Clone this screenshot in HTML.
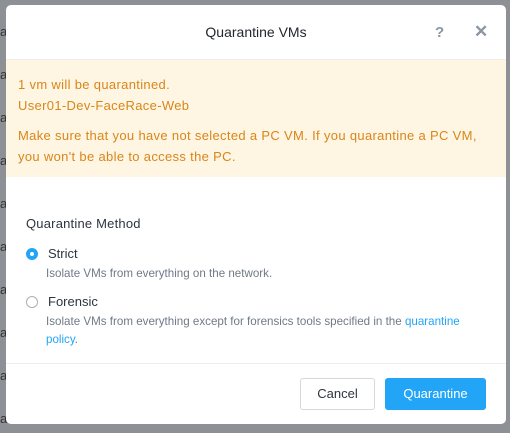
<!DOCTYPE html>
<html><head><style>
body{margin:0;width:510px;height:433px;background:#8d9094;position:relative;overflow:hidden;font-family:"Liberation Sans",sans-serif;}
.bga{position:absolute;left:0;font-size:13px;color:#333;}
.dlg{position:absolute;left:6px;top:5px;width:500px;height:419px;background:#fff;border-radius:5px;overflow:hidden}
.t{position:absolute;white-space:nowrap}
.w{letter-spacing:0.33px}
</style></head><body>
<div class="bga" style="top:24px">a</div>
<div class="bga" style="top:67px">a</div>
<div class="bga" style="top:110px">a</div>
<div class="bga" style="top:153px">a</div>
<div class="bga" style="top:196px">a</div>
<div class="bga" style="top:239px">a</div>
<div class="bga" style="top:282px">a</div>
<div class="bga" style="top:325px">a</div>
<div class="bga" style="top:368px">a</div>
<div class="bga" style="top:411px">a</div>
<div class="dlg">
 <div class="t" style="left:0;width:500px;text-align:center;top:19px;font-size:14px;color:#22272e">Quarantine VMs</div>
 <div class="t" style="left:429px;top:19px;font-size:15px;font-weight:bold;color:#8a96a3">?</div>
 <div class="t" style="left:468px;top:17px;font-size:17px;font-weight:bold;color:#8a96a3">✕</div>
 <div style="position:absolute;left:0;top:54px;width:500px;height:1px;background:#eceef0"></div>
 <div style="position:absolute;left:0;top:55px;width:500px;height:117px;background:#fef5e3"></div>
 <div class="t w" style="left:12px;top:72px;font-size:13px;color:#d9861a">1 vm will be quarantined.</div>
 <div class="t w" style="left:12px;top:93px;font-size:13px;color:#d9861a">User01-Dev-FaceRace-Web</div>
 <div class="t w" style="left:12px;top:120px;font-size:13px;color:#d9861a;line-height:21px">Make sure that you have not selected a PC VM. If you quarantine a PC VM,<br>you won't be able to access the PC.</div>
 <div class="t" style="left:20px;top:211px;font-size:13px;color:#2d3540;letter-spacing:0.2px">Quarantine Method</div>
 <div style="position:absolute;left:20px;top:243px;width:12px;height:12px;border-radius:50%;background:#22a5f7"><div style="position:absolute;left:4px;top:4px;width:4px;height:4px;border-radius:50%;background:#fff"></div></div>
 <div class="t" style="left:42px;top:241px;font-size:13px;color:#2d3540">Strict</div>
 <div class="t" style="left:40px;top:262px;font-size:11.6px;color:#6f7a86">Isolate VMs from everything on the network.</div>
 <div style="position:absolute;left:20px;top:291px;width:10px;height:10px;border-radius:50%;border:1px solid #a8b0ba"></div>
 <div class="t" style="left:42px;top:289px;font-size:13px;color:#2d3540">Forensic</div>
 <div class="t" style="left:40px;top:308px;font-size:11.6px;color:#6f7a86;line-height:18px">Isolate VMs from everything except for forensics tools specified in the <span style="color:#22a5f7">quarantine</span><br><span style="color:#22a5f7">policy</span>.</div>
 <div style="position:absolute;left:0;top:358px;width:500px;height:1px;background:#eceef0"></div>
 <div style="position:absolute;left:294px;top:373px;width:73px;height:30px;border:1px solid #d4d9de;border-radius:3px;text-align:center;line-height:30px;font-size:13px;color:#2d3540">Cancel</div>
 <div style="position:absolute;left:379px;top:373px;width:101px;height:32px;background:#22a5f7;border-radius:3px;text-align:center;line-height:32px;font-size:13px;color:#fff">Quarantine</div>
</div>
</body></html>
